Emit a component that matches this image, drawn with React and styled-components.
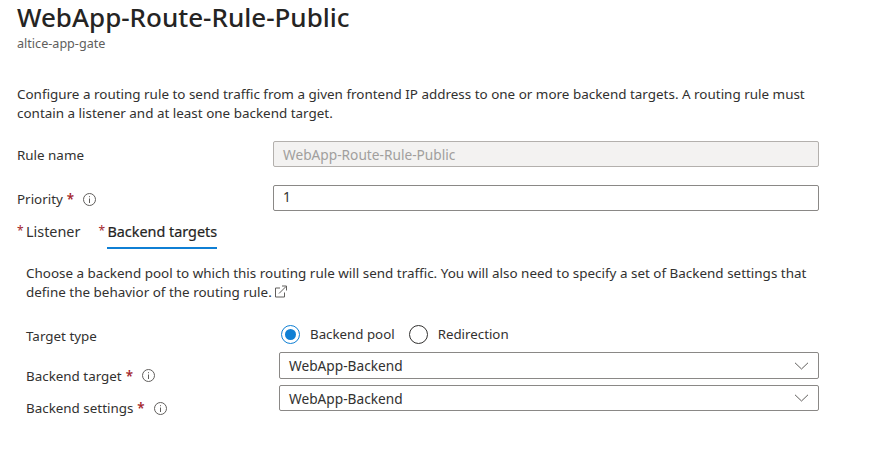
import React from "react";
import styled, { createGlobalStyle } from "styled-components";

const Global = createGlobalStyle`
  html, body {
    margin: 0;
    background: #fff;
  }
  body {
    font-family: "Noto Sans", "Open Sans", sans-serif;
    font-size: 13px;
    color: #323130;
  }
`;

const Page = styled.div`
  width: 873px;
  height: 463px;
  overflow: hidden;
  padding: 0 54px 0 17px;
  box-sizing: border-box;
`;

const Title = styled.h1`
  margin: 0;
  height: 35px;
  line-height: 34px;
  font-size: 26px;
  font-weight: 500;
  color: #252423;
  white-space: nowrap;
`;

const Subtitle = styled.div`
  height: 18px;
  line-height: 18px;
  font-size: 12.6px;
  color: #605e5c;
`;

const Paragraph = styled.p`
  margin: ${p => p.$margin || "0"};
  line-height: 19px;
  font-size: 13.45px;
  white-space: nowrap;
`;

const Row = styled.div`
  display: flex;
  align-items: center;
  height: ${p => p.$height || 26}px;
  margin-top: ${p => p.$top || 0}px;
`;

const Label = styled.div`
  display: flex;
  align-items: center;
  width: ${p => p.$width || 256}px;
  flex-shrink: 0;
  font-size: 13.4px;
  position: relative;
  top: ${p => p.$shift || 0}px;
`;

const Star = styled.span`
  color: #a4262c;
  font-weight: 600;
  margin-left: 4px;
`;

const Info = styled.svg`
  width: 13px;
  height: 13px;
  margin-left: 9px;
  flex-shrink: 0;
`;

const TextBox = styled.div`
  flex: 1;
  height: 100%;
  box-sizing: border-box;
  border: 1px solid ${p => (p.$disabled ? "#b3b0ad" : "#8a8886")};
  border-radius: 2px;
  background: ${p => (p.$disabled ? "#f3f2f1" : "#fff")};
  color: ${p => (p.$disabled ? "#a19f9d" : "#323130")};
  display: flex;
  align-items: center;
  justify-content: space-between;
  padding: 0 9px ${p => p.$lift || 0}px;
  font-size: 13.7px;
`;

const Tabs = styled.div`
  display: flex;
  gap: 27px;
  height: 32px;
  margin-top: 6px;
  padding-left: 9px;
`;

const Tab = styled.div`
  font-size: 14.4px;
  line-height: 30px;
  height: 30px;
  position: relative;
  color: ${p => (p.$active ? "#252423" : "#323130")};
  -webkit-text-stroke: ${p => (p.$active ? "0.2px #252423" : "0")};
  border-bottom: 2px solid ${p => (p.$active ? "#0f7fd4" : "transparent")};

  &::before {
    content: "*";
    position: absolute;
    left: -9px;
    top: -1px;
    font-size: 12px;
    color: #a4262c;
    -webkit-text-stroke: 0;
  }
`;

const Panel = styled.section`
  padding-left: 9px;
`;

const RadioGroup = styled.div`
  display: flex;
  align-items: center;
  margin-left: 2px;
  gap: 14px;
`;

const RadioItem = styled.div`
  display: flex;
  align-items: center;
  gap: 10px;
  font-size: 13.3px;
`;

const RadioDot = styled.span`
  width: 19px;
  height: 19px;
  box-sizing: border-box;
  border-radius: 50%;
  border: 1px solid ${p => (p.$checked ? "#0f7fd4" : "#323130")};
  display: flex;
  align-items: center;
  justify-content: center;

  &::after {
    content: "";
    width: 11px;
    height: 11px;
    border-radius: 50%;
    background: ${p => (p.$checked ? "#0f7fd4" : "transparent")};
  }
`;

const ExternalIcon = styled.svg`
  width: 13px;
  height: 13px;
  margin-left: 2px;
  vertical-align: -1px;
`;

const InfoIcon = () => (
  <Info viewBox="0 0 13 13" fill="none" stroke="#605e5c">
    <circle cx="6.5" cy="6.5" r="6" />
    <path d="M6.5 5.5V10M6.5 3.2V4.2" />
  </Info>
);

const Chevron = () => (
  <svg width="15" height="8" viewBox="0 0 15 8" fill="none" stroke="#605e5c">
    <path d="M1 .8L7.5 7L14 .8" />
  </svg>
);

const Select = ({ value }) => (
  <TextBox>
    {value}
    <Chevron />
  </TextBox>
);

export default function App() {
  return (
    <Page>
      <Global />
      <Title>WebApp-Route-Rule-Public</Title>
      <Subtitle>altice-app-gate</Subtitle>
      <Paragraph $margin="32px 0 0">
        Configure a routing rule to send traffic from a given frontend IP address to one or more backend targets. A routing rule must
        <br />
        contain a listener and at least one backend target.
      </Paragraph>
      <Row $top={18}>
        <Label $shift={1}>Rule name</Label>
        <TextBox $disabled>WebApp-Route-Rule-Public</TextBox>
      </Row>
      <Row $top={18}>
        <Label $shift={1}>
          Priority<Star>*</Star>
          <InfoIcon />
        </Label>
        <TextBox $lift={3}>1</TextBox>
      </Row>
      <Tabs>
        <Tab>Listener</Tab>
        <Tab $active>Backend targets</Tab>
      </Tabs>
      <Panel>
        <Paragraph $margin="15px 0 0">
          Choose a backend pool to which this routing rule will send traffic. You will also need to specify a set of Backend settings that
          <br />
          define the behavior of the routing rule.
          <ExternalIcon viewBox="0 0 13 13" fill="none" stroke="#605e5c">
            <path d="M6 3H1.5V12H10.5V7.5M5 8.5L12 1.5M8 1H12.5V5.5" />
          </ExternalIcon>
        </Paragraph>
        <Row $top={18} $height={28}>
          <Label $width={253} $shift={2}>Target type</Label>
          <RadioGroup>
            <RadioItem>
              <RadioDot $checked />
              Backend pool
            </RadioItem>
            <RadioItem>
              <RadioDot />
              Redirection
            </RadioItem>
          </RadioGroup>
        </Row>
        <Row $top={4} $height={27}>
          <Label $width={253} $shift={10}>
            Backend target<Star>*</Star>
            <InfoIcon />
          </Label>
          <Select value="WebApp-Backend" />
        </Row>
        <Row $top={6} $height={26}>
          <Label $width={253} $shift={10}>
            Backend settings<Star>*</Star>
            <InfoIcon />
          </Label>
          <Select value="WebApp-Backend" />
        </Row>
      </Panel>
    </Page>
  );
}
